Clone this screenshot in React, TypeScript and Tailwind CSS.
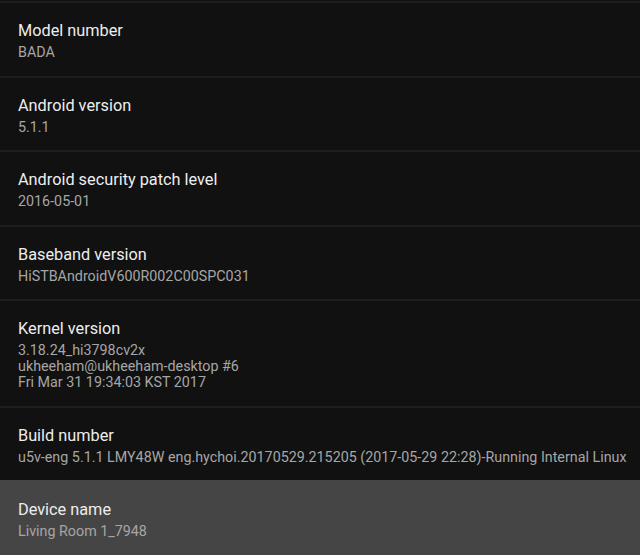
const rows: { title: string; value: string[]; active?: boolean }[] = [
  { title: "Model number", value: ["BADA"] },
  { title: "Android version", value: ["5.1.1"] },
  { title: "Android security patch level", value: ["2016-05-01"] },
  { title: "Baseband version", value: ["HiSTBAndroidV600R002C00SPC031"] },
  {
    title: "Kernel version",
    value: [
      "3.18.24_hi3798cv2x",
      "ukheeham@ukheeham-desktop #6",
      "Fri Mar 31 19:34:03 KST 2017",
    ],
  },
  {
    title: "Build number",
    value: [
      "u5v-eng 5.1.1 LMY48W eng.hychoi.20170529.215205 (2017-05-29 22:28)-Running Internal Linux",
    ],
  },
  { title: "Device name", value: ["Living Room 1_7948"], active: true },
];

export default function App() {
  return (
    <div
      className="w-[640px] h-[555px] overflow-hidden bg-[#111111] pt-px"
      style={{ fontFamily: "Roboto, 'Liberation Sans', sans-serif" }}
    >
      {rows.map((row) => (
        <div
          key={row.title}
          className={
            row.active
              ? "border-t-2 border-[#454545] bg-[#454545] pl-[18px] pt-[18px] pb-[15.5px]"
              : "border-t-2 border-[#1e1e1e] pl-[18px] pt-[18px] pb-[15.5px]"
          }
        >
          <div className="text-[16.3px] leading-[20px] text-[#ededed] whitespace-nowrap">
            {row.title}
          </div>
          <div className="mt-[3px]">
            {row.value.map((v) => (
              <div
                key={v}
                className="text-[14.3px] leading-[16px] text-[#a6a6a6] whitespace-nowrap"
              >
                {v}
              </div>
            ))}
          </div>
        </div>
      ))}
    </div>
  );
}
